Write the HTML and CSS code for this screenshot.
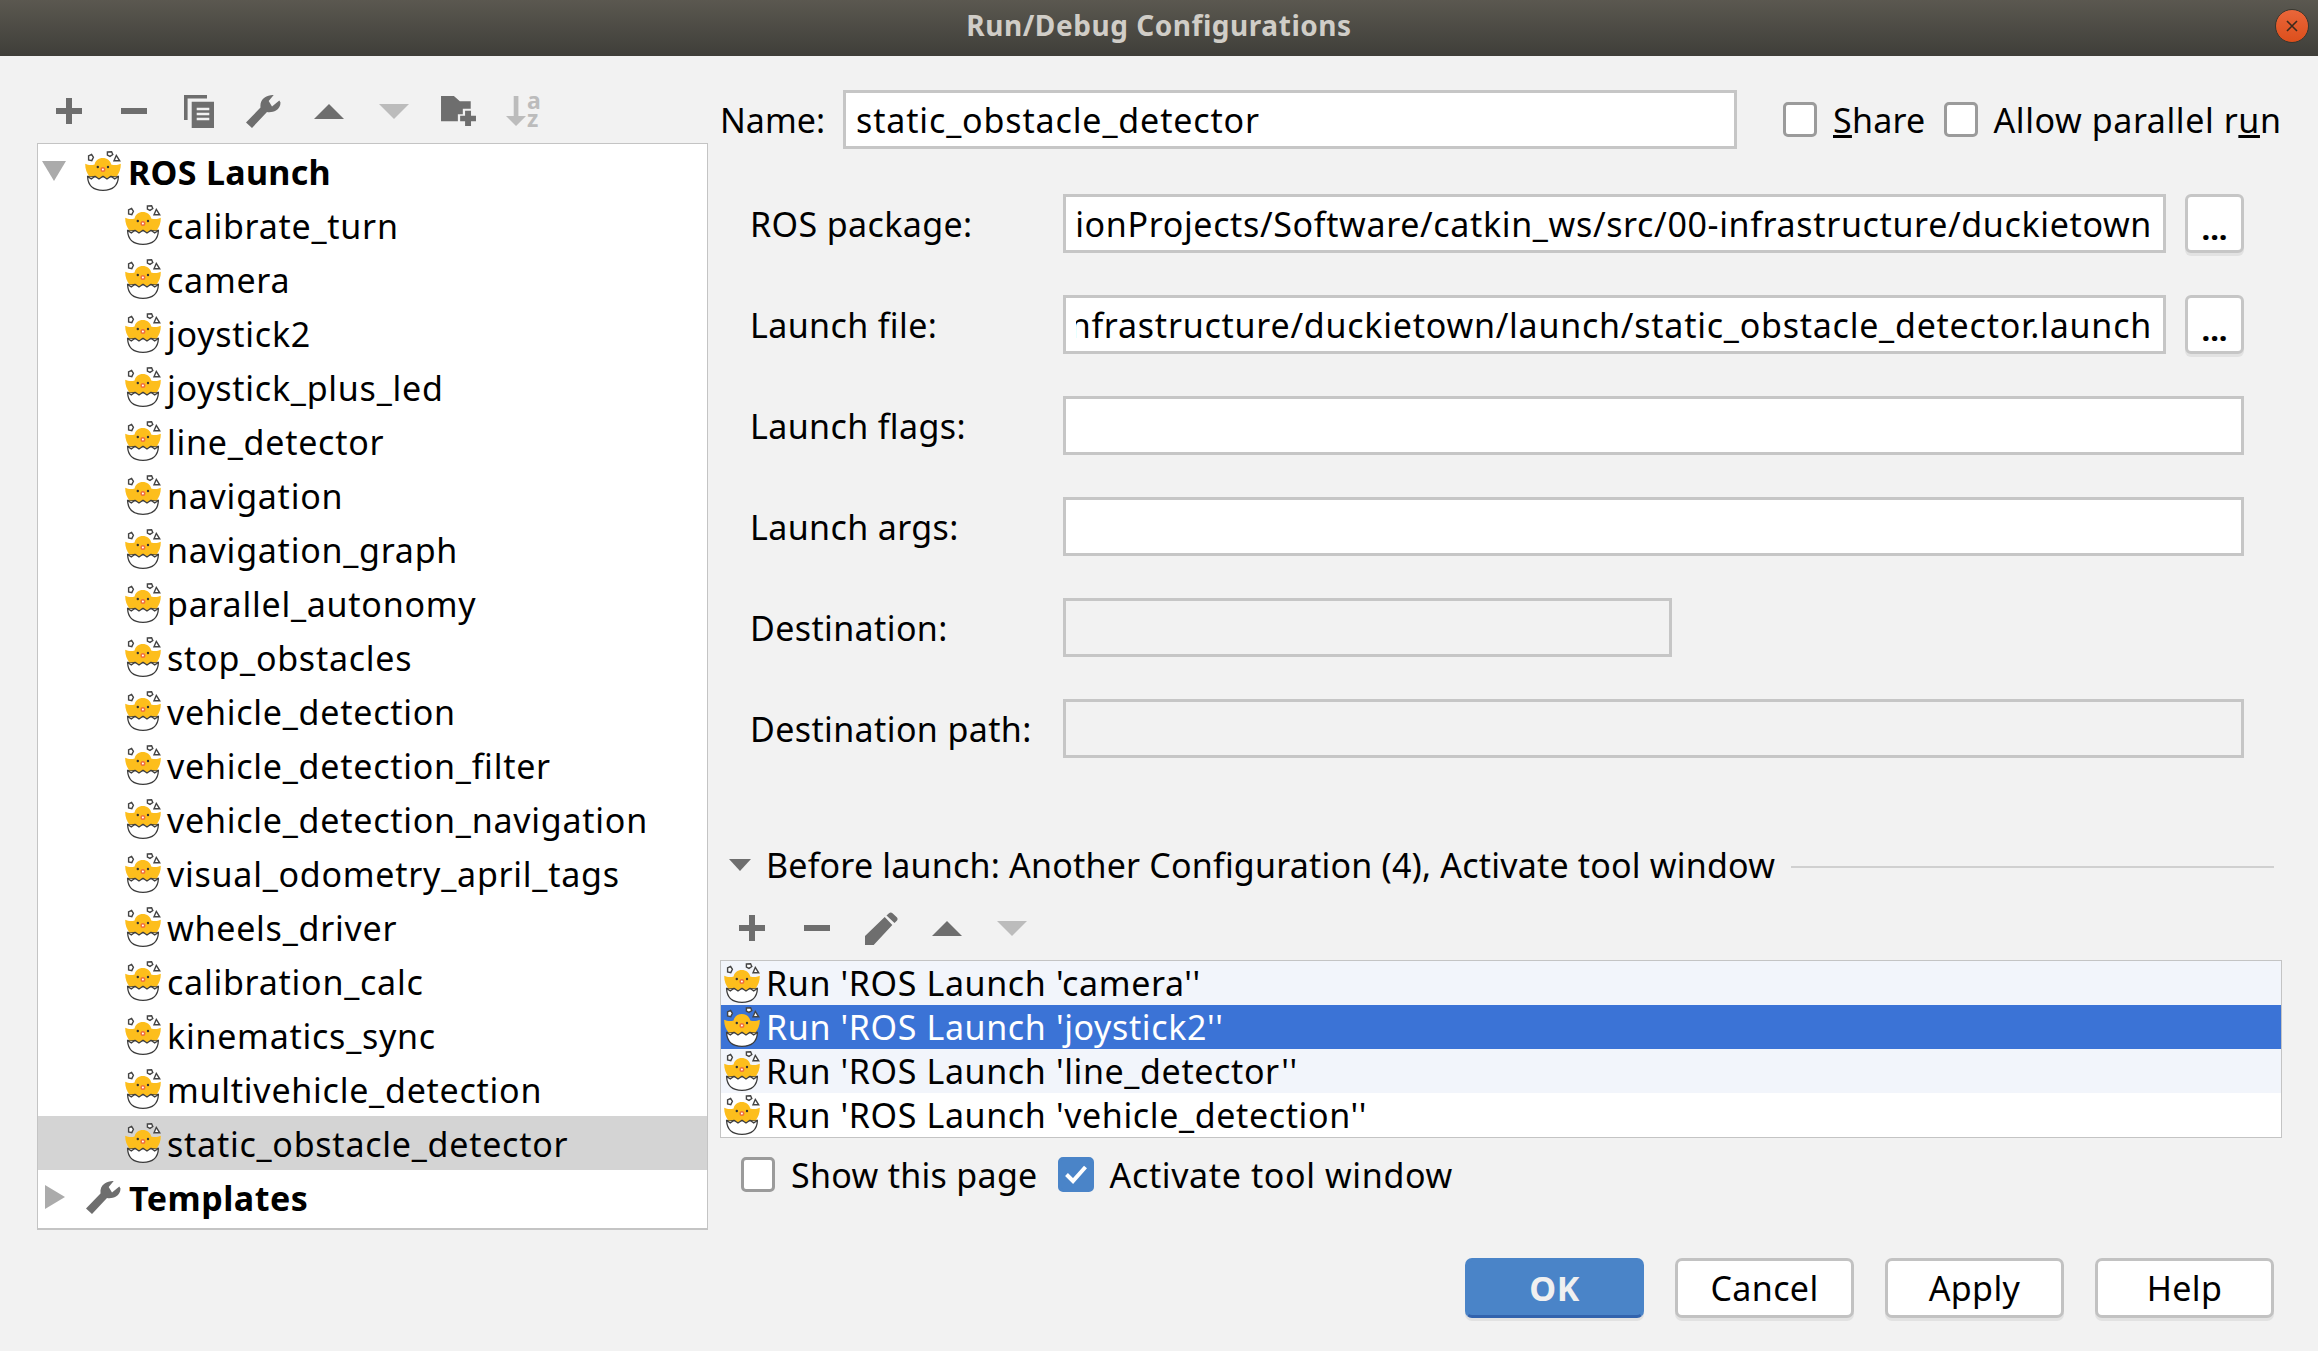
FILE: index.html
```html
<!DOCTYPE html>
<html lang="en">
<head>
<meta charset="utf-8">
<title>Run/Debug Configurations</title>
<link rel="stylesheet" href="styles.css">
</head>
<body>
<svg class="defs" aria-hidden="true">
  <symbol id="chick" viewBox="0 0 36 40">
    <path d="M2.6 25.5 C3 35 9 39.3 18 39.3 C27 39.3 33 35 33.4 25.5 Z" fill="#fff" stroke="#3d3d3d" stroke-width="1.3"/>
    <path d="M0.2 12.8 C3 14 6.5 14.6 9.6 13.4 C10.4 9.6 13.6 7 17.8 7 C22 7 25.4 9.6 26.2 13.4 C29.5 14.6 33 14 35.8 12.8 C36 18 34 22.5 31.5 25.5 L26 25 L22 27.5 L18 25 L14 27.5 L10 25 L4.5 25.5 C2 22.5 0 18 0.2 12.8 Z" fill="#fdbe1c"/>
    <path d="M2.6 25.5 L6.3 28 L10 25.3 L14 28 L18 25.3 L22 28 L26 25.3 L29.7 28 L33.4 25.5" fill="none" stroke="#3d3d3d" stroke-width="1.3"/>
    <circle cx="12.8" cy="16" r="1.2" fill="#333"/><circle cx="23" cy="16" r="1.2" fill="#333"/>
    <circle cx="17.9" cy="18.4" r="2.5" fill="#f0703a"/><circle cx="17.9" cy="18.4" r="1" fill="#fff"/>
    <path d="M3.6 4.8 L6.6 3.4 L8.4 6.3 L6.8 9.6 L3.6 9 Z" fill="#fff" stroke="#444" stroke-width="1.4"/>
    <path d="M22.4 1 L26.6 0.8 L27.8 3.5 L25 5.4 L22.4 4 Z" fill="#fff" stroke="#444" stroke-width="1.4"/>
    <path d="M31.3 4.4 L34.7 9.8 L29 9.8 Z" fill="#fff" stroke="#444" stroke-width="1.4"/>
  </symbol>
  <symbol id="plus" viewBox="0 0 26 26"><path d="M10 0h6v10h10v6H16v10h-6V16H0v-6h10z" fill="#6e6e6e"/></symbol>
  <symbol id="minus" viewBox="0 0 26 6"><rect width="26" height="6" fill="#6e6e6e"/></symbol>
  <symbol id="up" viewBox="0 0 30 15"><path d="M15 0L30 15H0z" fill="#6e6e6e"/></symbol>
  <symbol id="down" viewBox="0 0 30 15"><path d="M0 0H30L15 15z" fill="#bcbcbc"/></symbol>
  <symbol id="wrench" viewBox="0 0 35 35"><path d="M0 28.5 L14.5 13.5 C14 9 15.5 5.5 18.7 3.5 C21 1.8 24.5 0.8 27.7 1 L22.7 7 L26 12.5 L33.3 6.5 L34.5 8.5 C34.5 12 33 14.5 30 16.5 C27.5 18 24 18.5 21 18 L6 34 Z" fill="#6e6e6e"/></symbol>
</svg>

<header class="titlebar">
  <span class="title">Run/Debug Configurations</span>
  <span class="close"><svg class="close-x" viewBox="0 0 12 12"><path d="M1 1L11 11M11 1L1 11" stroke="#3b2a1e" stroke-width="1.6"/></svg></span>
</header>

<main class="main">
  <section class="left">
    <div class="toolbar first-bar">
      <span class="tool"><svg class="i-plus"><use href="#plus"/></svg></span>
      <span class="tool"><svg class="i-minus"><use href="#minus"/></svg></span>
      <span class="tool"><svg class="i-copy" viewBox="0 0 30 33"><path d="M0 0H23V3.5H3.6V25H0Z M7.7 6.7H30V33H7.7Z" fill="#6e6e6e"/><path d="M12.7 14H25.3M12.7 19H25.3M12.7 24H25.3" stroke="#f2f2f2" stroke-width="2.4"/></svg></span>
      <span class="tool"><svg class="i-wrench"><use href="#wrench"/></svg></span>
      <span class="tool"><svg class="i-tri"><use href="#up"/></svg></span>
      <span class="tool"><svg class="i-tri"><use href="#down"/></svg></span>
      <span class="tool"><svg class="i-folder" viewBox="0 0 35.3 30.3"><path d="M0 0H13L19 5.3H30V13H22V18.5H17V25.5H0Z" fill="#6e6e6e"/><path d="M24.3 15h6v5h5v5.4h-5v5h-6v-5h-5V20h5z" fill="#6e6e6e"/></svg></span>
      <span class="tool sort"><svg class="i-sort" viewBox="0 0 20 30"><path d="M7.7 0h4.7v20H20L10 30 0 20h7.7z" fill="#bcbcbc"/></svg><span class="sort-letters">a<br>z</span></span>
    </div>
    <div class="tree">
      <div class="tree-row root"><svg class="tw-down" viewBox="0 0 24 20"><path d="M0 0H24L12 20z" fill="#ababab"/></svg><svg class="chick"><use href="#chick"/></svg><span class="strong">ROS Launch</span></div>
      <div class="tree-row child"><svg class="chick"><use href="#chick"/></svg><span>calibrate_turn</span></div>
      <div class="tree-row child"><svg class="chick"><use href="#chick"/></svg><span>camera</span></div>
      <div class="tree-row child"><svg class="chick"><use href="#chick"/></svg><span>joystick2</span></div>
      <div class="tree-row child"><svg class="chick"><use href="#chick"/></svg><span>joystick_plus_led</span></div>
      <div class="tree-row child"><svg class="chick"><use href="#chick"/></svg><span>line_detector</span></div>
      <div class="tree-row child"><svg class="chick"><use href="#chick"/></svg><span>navigation</span></div>
      <div class="tree-row child"><svg class="chick"><use href="#chick"/></svg><span>navigation_graph</span></div>
      <div class="tree-row child"><svg class="chick"><use href="#chick"/></svg><span>parallel_autonomy</span></div>
      <div class="tree-row child"><svg class="chick"><use href="#chick"/></svg><span>stop_obstacles</span></div>
      <div class="tree-row child"><svg class="chick"><use href="#chick"/></svg><span>vehicle_detection</span></div>
      <div class="tree-row child"><svg class="chick"><use href="#chick"/></svg><span>vehicle_detection_filter</span></div>
      <div class="tree-row child"><svg class="chick"><use href="#chick"/></svg><span>vehicle_detection_navigation</span></div>
      <div class="tree-row child"><svg class="chick"><use href="#chick"/></svg><span>visual_odometry_april_tags</span></div>
      <div class="tree-row child"><svg class="chick"><use href="#chick"/></svg><span>wheels_driver</span></div>
      <div class="tree-row child"><svg class="chick"><use href="#chick"/></svg><span>calibration_calc</span></div>
      <div class="tree-row child"><svg class="chick"><use href="#chick"/></svg><span>kinematics_sync</span></div>
      <div class="tree-row child"><svg class="chick"><use href="#chick"/></svg><span>multivehicle_detection</span></div>
      <div class="tree-row child selected"><svg class="chick"><use href="#chick"/></svg><span>static_obstacle_detector</span></div>
      <div class="tree-row root"><svg class="tw-right" viewBox="0 0 20 24"><path d="M0 0L20 12L0 24z" fill="#ababab"/></svg><svg class="wrench-row"><use href="#wrench"/></svg><span class="strong templates">Templates</span></div>
    </div>
  </section>

  <section class="right">
    <div class="name-row">
      <span class="name-label">Name:</span>
      <div class="field name-field"><span>static_obstacle_detector</span></div>
      <span class="check first"></span><span class="check-label tight"><u>S</u>hare</span>
      <span class="check second"></span><span class="check-label">Allow parallel r<u>u</u>n</span>
    </div>

    <div class="form">
      <span class="label">ROS package:</span>
      <div class="field clipped"><div class="clip"><span>ionProjects/Software/catkin_ws/src/00-infrastructure/duckietown</span></div></div>
      <span class="dots">...</span>

      <span class="label">Launch file:</span>
      <div class="field clipped"><div class="clip wider"><span>infrastructure/duckietown/launch/static_obstacle_detector.launch</span></div></div>
      <span class="dots">...</span>

      <span class="label">Launch flags:</span>
      <div class="field wide"></div>

      <span class="label">Launch args:</span>
      <div class="field wide"></div>

      <span class="label">Destination:</span>
      <div class="field disabled short"></div>

      <span class="label">Destination path:</span>
      <div class="field disabled wide"></div>
    </div>

    <div class="before-head">
      <svg class="before-tri" viewBox="0 0 22 12"><path d="M0 0H22L11 12z" fill="#6e6e6e"/></svg>
      <span>Before launch: Another Configuration (4), Activate tool window</span>
      <span class="rule"></span>
    </div>

    <div class="toolbar second-bar">
      <span class="tool"><svg class="i-plus"><use href="#plus"/></svg></span>
      <span class="tool"><svg class="i-minus"><use href="#minus"/></svg></span>
      <span class="tool"><svg class="i-pencil" viewBox="0 0 33 33"><path d="M0 24L19.7 5L27.3 13L8.7 33H0Z M21.5 3.5L24 1.2C25 0.2 26.5 0.2 27.5 1.2L31.8 5.2C32.8 6.2 32.8 7.8 31.8 8.8L29.5 11Z" fill="#6e6e6e"/></svg></span>
      <span class="tool"><svg class="i-tri"><use href="#up"/></svg></span>
      <span class="tool"><svg class="i-tri"><use href="#down"/></svg></span>
    </div>

    <div class="list">
      <div class="list-row tint"><svg class="chick small"><use href="#chick"/></svg><span>Run 'ROS Launch 'camera''</span></div>
      <div class="list-row active"><svg class="chick small"><use href="#chick"/></svg><span>Run 'ROS Launch 'joystick2''</span></div>
      <div class="list-row tint"><svg class="chick small"><use href="#chick"/></svg><span>Run 'ROS Launch 'line_detector''</span></div>
      <div class="list-row"><svg class="chick small"><use href="#chick"/></svg><span>Run 'ROS Launch 'vehicle_detection''</span></div>
    </div>

    <div class="checks">
      <span class="check"></span><span class="check-label show">Show this page</span>
      <span class="check on"><svg class="tick" viewBox="0 0 24 20"><path d="M2.5 10.5L9 17L21.5 3" fill="none" stroke="#fff" stroke-width="4"/></svg></span><span class="check-label activate">Activate tool window</span>
    </div>

    <div class="footer">
      <span class="btn primary">OK</span>
      <span class="btn">Cancel</span>
      <span class="btn">Apply</span>
      <span class="btn">Help</span>
    </div>
  </section>
</main>
</body>
</html>
```
FILE: styles.css
```css
* { box-sizing: border-box; }
html, body { margin: 0; padding: 0; }
body {
  width: 2318px;
  height: 1351px;
  overflow: hidden;
  background: #f2f2f2;
  color: #000;
  font-family: "Noto Sans", "Open Sans", sans-serif;
  font-size: 34px;
}
.defs { display: block; width: 0; height: 0; }

.titlebar {
  position: relative;
  height: 56px;
  display: flex;
  align-items: center;
  justify-content: center;
  padding-bottom: 6px;
  background: linear-gradient(#5b5850, #3f3e39);
}
.title { font-size: 28px; font-weight: 700; letter-spacing: 0.55px; color: #d0cdc7; }
.close {
  position: absolute;
  left: 2275px;
  top: 9px;
  width: 34px;
  height: 34px;
  border-radius: 50%;
  display: flex;
  align-items: center;
  justify-content: center;
  background: linear-gradient(#e9663a, #dc4f1c);
  border: 1px solid #39372f;
}
.close-x { width: 12px; height: 12px; }

.main { display: flex; }
.left { width: 683px; margin-left: 37px; flex: none; }
.right { width: 1562px; flex: none; }

.toolbar { display: flex; align-items: center; height: 87px; }
.first-bar { padding-top: 23px; margin-left: -1px; }
.tool { width: 65px; flex: none; display: flex; align-items: center; justify-content: center; }
.i-plus { width: 26px; height: 26px; }
.i-minus { width: 26px; height: 6px; }
.i-copy { width: 30px; height: 33px; }
.i-wrench { width: 35px; height: 35px; }
.i-tri { width: 30px; height: 15px; }
.i-folder { width: 35px; height: 30px; }
.i-sort { width: 20px; height: 30px; flex: none; }
.i-pencil { width: 33px; height: 33px; }
.sort-letters {
  display: block;
  margin-left: 1px;
  padding-bottom: 4px;
  color: #bcbcbc;
  font-size: 23px;
  font-weight: 700;
  line-height: 18px;
}

.tree {
  width: 671px;
  height: 1087px;
  background: #fff;
  border: 1px solid #c4c4c4;
  border-bottom-width: 2px;
}
.tree-row { height: 54px; display: flex; align-items: center; white-space: nowrap; letter-spacing: 0.75px; }
.tree-row span { padding-top: 1px; }
.root { padding-left: 4px; }
.child { padding-left: 87px; }
.selected { background: #d4d4d4; }
.strong { font-weight: 700; letter-spacing: 0.3px; }
.strong.templates { letter-spacing: 0.5px; }
.chick { width: 36px; height: 40px; flex: none; margin-right: 6px; }
.tw-down { width: 24px; height: 20px; flex: none; margin-right: 19px; }
.tw-right { width: 20px; height: 24px; flex: none; margin: 0 21px 0 3px; }
.wrench-row { width: 35px; height: 35px; flex: none; margin-right: 8px; }
.root .chick { margin-right: 7px; }

.name-row { display: flex; align-items: center; height: 59px; margin-top: 34px; }
.name-label { width: 123px; flex: none; }
.field {
  height: 59px;
  background: #fff;
  border: 3px solid #c6c6c6;
  display: flex;
  align-items: center;
  white-space: nowrap;
}
.name-field { width: 894px; flex: none; padding-left: 10px; margin-right: 46px; letter-spacing: 0.86px; }
.check {
  width: 34px;
  height: 35px;
  flex: none;
  background: #fff;
  border: 3px solid #9b9b9b;
  border-radius: 5px;
  display: flex;
  align-items: center;
  justify-content: center;
}
.check-label { margin-left: 16px; white-space: nowrap; letter-spacing: 0.58px; }
.check-label.tight { letter-spacing: 0.25px; }
.check-label.show { letter-spacing: 0.3px; padding-top: 1px; }
.check-label.activate { letter-spacing: 0.62px; padding-top: 1px; }
.check.second { margin-left: 18px; }
.check.on { background: #4a84c8; border-color: #4a84c8; margin-left: 20px; width: 36px; }
.tick { width: 24px; height: 20px; }

.form {
  display: grid;
  grid-template-columns: 313px 1103px 78px;
  row-gap: 42px;
  grid-auto-rows: 59px;
  align-items: center;
  margin: 45px 0 0 30px;
  width: 1494px;
}
.label { white-space: nowrap; letter-spacing: 0.38px; }
.wide { grid-column: 2 / span 2; }
.short { grid-column: 2 / span 2; width: 609px; }
.disabled { background: #f2f2f2; }
.clipped { justify-content: flex-end; }
.clip {
  overflow: hidden;
  display: flex;
  justify-content: flex-end;
  width: 1076px;
  margin-right: 11px;
  letter-spacing: 0.65px;
}
.clip.wider { letter-spacing: 0.76px; }
.clip span { flex: none; }
.dots {
  height: 59px;
  width: 59px;
  justify-self: end;
  display: flex;
  align-items: center;
  justify-content: center;
  background: #fff;
  border: 3px solid #c6c6c6;
  border-radius: 6px;
  box-shadow: 0 3px 0 #e2e2e2;
  font-size: 31px;
  font-weight: 700;
  line-height: 1;
  padding-top: 9px;
}

.before-head {
  display: flex;
  align-items: center;
  height: 40px;
  margin-top: 87px;
  padding-left: 9px;
  white-space: nowrap;
  letter-spacing: 0.2px;
}
.before-tri { width: 22px; height: 12px; flex: none; margin-right: 15px; }
.rule { flex: 1; height: 2px; background: #d0d0d0; margin: 4px 8px 0 16px; }
.second-bar { height: 60px; margin-top: 13px; margin-left: -1px; }
.list {
  margin-top: 2px;
  width: 1562px;
  height: 178px;
  background: #fff;
  border: 1px solid #c4c4c4;
}
.list-row { height: 44px; display: flex; align-items: center; padding-left: 3px; white-space: nowrap; letter-spacing: 0.62px; }
.list-row.tint { background: #f2f5fb; }
.list-row.active { background: #3b73d6; color: #fff; }
.chick.small { margin-right: 6px; }

.checks { display: flex; align-items: center; height: 34px; margin-top: 19px; padding-left: 21px; }

.footer { display: flex; justify-content: flex-end; gap: 31px; margin-top: 67px; padding-right: 8px; }
.btn {
  width: 179px;
  height: 60px;
  display: flex;
  align-items: center;
  justify-content: center;
  background: #fff;
  border: 3px solid #c2c2c2;
  border-radius: 7px;
  box-shadow: 0 3px 0 #e2e2e2;
  letter-spacing: 0.4px;
}
.btn.primary {
  background: #4a84c8;
  border-color: #4a84c8 #4a84c8 #3263ad;
  color: #f0f0f0;
  font-weight: 700;
}
```
